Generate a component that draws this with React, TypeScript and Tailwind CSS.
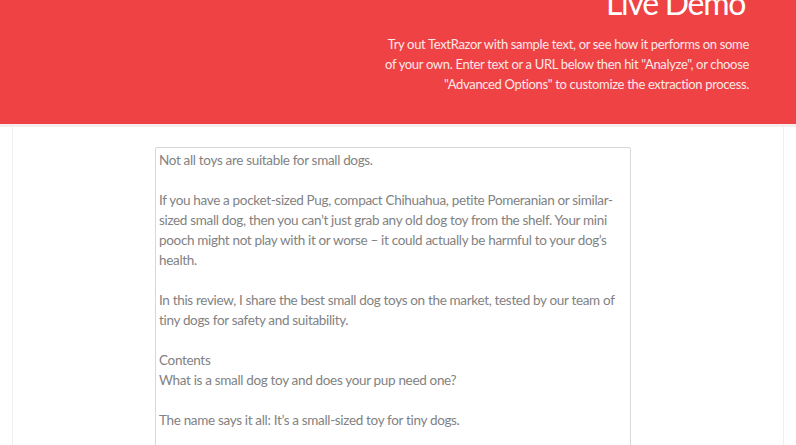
import React from 'react';

const sample = [
  'Not all toys are suitable for small dogs.',
  '',
  'If you have a pocket-sized Pug, compact Chihuahua, petite Pomeranian or similar-',
  'sized small dog, then you can\u2019t just grab any old dog toy from the shelf. Your mini',
  'pooch might not play with it or worse \u2013 it could actually be harmful to your dog\u2019s',
  'health.',
  '',
  'In this review, I share the best small dog toys on the market, tested by our team of',
  'tiny dogs for safety and suitability.',
  '',
  'Contents',
  'What is a small dog toy and does your pup need one?',
  '',
  'The name says it all: It\u2019s a small-sized toy for tiny dogs.',
  '',
  'Small dog toys are designed for the mouths and paws of little dogs.',
].join('\n');

const App: React.FC = () => {
  return (
    <div className="w-[796px] h-[445px] overflow-hidden bg-white" style={{ fontFamily: 'Lato, "Open Sans", sans-serif' }}>
      <header className="h-[124px] bg-[#ee4245] flex justify-end pr-[47px]">
        <div className="flex flex-col items-end">
          <h1 className="text-white text-[32px] leading-[40px] tracking-[-1.3px] mt-[-17px] mr-[4px]">Live Demo</h1>
          <p className="mt-[11px] text-right text-[13px] leading-[20px] tracking-[-0.33px] text-[#fde8e8]">
            Try out TextRazor with sample text, or see how it performs on some
            <br />
            of your own. Enter text or a URL below then hit "Analyze", or choose
            <br />
            "Advanced Options" to customize the extraction process.
          </p>
        </div>
      </header>
      <div className="h-[3px] bg-[#f6eeee]" />
      <div className="mx-[12px] h-[318px] border-x border-[#efefef] flex justify-center pt-[20px]">
        <textarea
          readOnly
          wrap="off"
          value={sample}
          className="w-[476px] h-[320px] shrink-0 border border-[#d8d8d8] rounded-[2px] px-[3px] pt-[2px] text-[13.5px] leading-[20px] tracking-[-0.33px] text-[#828282] resize-none overflow-hidden outline-none ml-[-10px]"
          style={{ fontFamily: 'Lato, "Open Sans", sans-serif' }}
        />
      </div>
    </div>
  );
};

export default App;
